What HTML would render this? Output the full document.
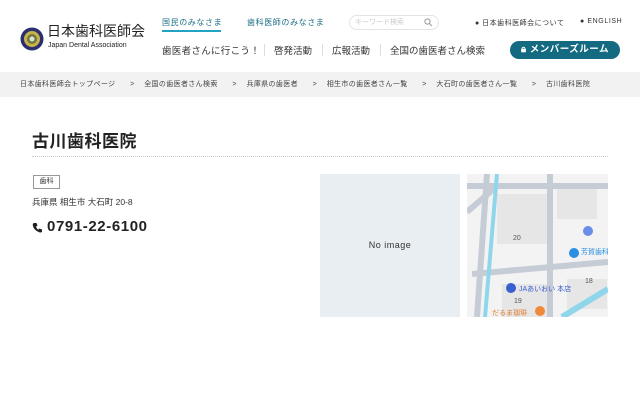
<!DOCTYPE html>
<html><head><meta charset="utf-8"><style>
*{margin:0;padding:0;box-sizing:border-box}
body{width:640px;height:400px;background:#fff;font-family:"Liberation Sans","Noto Sans CJK JP",sans-serif;color:#333;position:relative;overflow:hidden}
.a{position:absolute;white-space:nowrap}
</style></head><body>
<svg class="a" style="left:20px;top:27px" width="24" height="24"><circle cx="12" cy="12" r="11.5" fill="#2a2f6e"/><circle cx="12" cy="12" r="8" fill="#c9b24a"/><circle cx="12" cy="12" r="5" fill="#6b7a3a"/><circle cx="12" cy="12" r="2.5" fill="#ddd"/></svg>
<div class="a" style="left:47px;top:22px;font-size:14px;color:#222;line-height:18px">日本歯科医師会</div>
<div class="a" style="left:48px;top:42px;font-size:7px;color:#222">Japan Dental Association</div>
<div class="a" style="left:162px;top:17px;font-size:8px;color:#1a6e86;letter-spacing:0.6px">国民のみなさま</div>
<div class="a" style="left:162px;top:30px;width:59px;height:2px;background:#23a3c4"></div>
<div class="a" style="left:247px;top:17px;font-size:8px;color:#1a6e86;letter-spacing:0.6px">歯科医師のみなさま</div>
<div class="a" style="left:349px;top:15px;width:90px;height:15px;border:1px solid #e4e4e4;border-radius:8px"></div>
<div class="a" style="left:355px;top:17px;font-size:7px;color:#ccc">キーワード検索</div>
<svg class="a" style="left:424px;top:18px" width="9" height="9"><circle cx="3.5" cy="3.5" r="2.6" stroke="#999" fill="none"/><path d="M5.5 5.5L8 8" stroke="#999"/></svg>
<div class="a" style="left:475px;top:18px;font-size:7px;color:#333;letter-spacing:0.5px">● 日本歯科医師会について</div>
<div class="a" style="left:580px;top:18px;font-size:7px;color:#333;letter-spacing:0.6px">● ENGLISH</div>
<div class="a" style="left:162px;top:43px;font-size:9.5px;color:#333;letter-spacing:0.3px">歯医者さんに行こう！</div>
<div class="a" style="left:264px;top:44px;width:1px;height:12px;background:#ddd"></div>
<div class="a" style="left:274px;top:43px;font-size:9.5px;color:#333">啓発活動</div>
<div class="a" style="left:322px;top:44px;width:1px;height:12px;background:#ddd"></div>
<div class="a" style="left:332px;top:43px;font-size:9.5px;color:#333">広報活動</div>
<div class="a" style="left:380px;top:44px;width:1px;height:12px;background:#ddd"></div>
<div class="a" style="left:390px;top:43px;font-size:9.5px;color:#333">全国の歯医者さん検索</div>
<div class="a" style="left:510px;top:41px;width:110px;height:18px;border-radius:9px;background:#146a80;color:#fff;font-size:9.5px;font-weight:bold;text-align:center;line-height:18px;letter-spacing:0.5px">🔒︎ メンバーズルーム</div>
<div class="a" style="left:0;top:72px;width:640px;height:25px;background:#f2f2f2"></div>
<div class="a" style="left:20px;top:79px;font-size:7px;color:#444;letter-spacing:0.35px">日本歯科医師会トップページ　　&gt;　 全国の歯医者さん検索　　&gt;　 兵庫県の歯医者　　&gt;　 相生市の歯医者さん一覧　　&gt;　 大石町の歯医者さん一覧　　&gt;　 古川歯科医院</div>
<div class="a" style="left:32px;top:127px;font-size:17px;font-weight:bold;color:#222;letter-spacing:0.5px">古川歯科医院</div>
<div class="a" style="left:32px;top:156px;width:576px;border-top:1px dotted #ccc"></div>
<div class="a" style="left:33px;top:175px;width:27px;height:14px;border:1px solid #999;font-size:7px;text-align:center;line-height:12px">歯科</div>
<div class="a" style="left:32px;top:196px;font-size:8.5px;color:#333">兵庫県 相生市 大石町 20-8</div>
<svg class="a" style="left:32px;top:222px" width="11" height="11"><path d="M2 1L4.5 1 5.5 3.5 4 4.8Q5 7 6.2 7.8L7.5 6.5 10 7.5 10 10Q9 10.6 7.5 10.4 1 8 0.7 2.5Q0.8 1.3 2 1Z" fill="#222"/></svg>
<div class="a" style="left:47px;top:218px;font-size:15px;font-weight:bold;color:#222;letter-spacing:0.6px">0791-22-6100</div>
<div class="a" style="left:320px;top:174px;width:140px;height:143px;background:#e9eef2;font-size:9px;color:#333;text-align:center;line-height:143px;letter-spacing:0.5px">No image</div>
<svg class="a" style="left:467px;top:174px" width="141" height="143">
<rect width="141" height="143" fill="#f3f3f3"/>
<g fill="#e6e6e6"><rect x="30" y="20" width="50" height="50"/><rect x="90" y="10" width="40" height="35"/><rect x="35" y="110" width="50" height="33"/><rect x="100" y="105" width="40" height="30"/></g>
<g stroke="#c6ccd6" stroke-width="6" fill="none"><path d="M0 12H141"/><path d="M83 0V143"/><path d="M5 100L141 88"/><path d="M20 0L10 143"/><path d="M0 38L30 12"/></g>
<path d="M30 0L18 143" stroke="#8fd6ea" stroke-width="4" fill="none"/>
<path d="M95 143L141 115" stroke="#8fd6ea" stroke-width="6"/>
<circle cx="121" cy="57" r="5" fill="#6a8ee8"/><circle cx="107" cy="79" r="5" fill="#2a8fe0"/><circle cx="44" cy="114" r="5" fill="#3a5fcf"/><circle cx="73" cy="137" r="5" fill="#f08a3a"/>
<text x="46" y="66" font-size="7" fill="#555">20</text><text x="118" y="109" font-size="7" fill="#555">18</text><text x="47" y="129" font-size="7" fill="#555">19</text>
<text x="52" y="117" font-size="7" fill="#3a5fcf">JAあいおい 本店</text><text x="114" y="80" font-size="7" fill="#2a8fe0">芳賀歯科</text><text x="25" y="141" font-size="7" fill="#e07a2a">だるま珈琲</text>
</svg>
</body></html>
